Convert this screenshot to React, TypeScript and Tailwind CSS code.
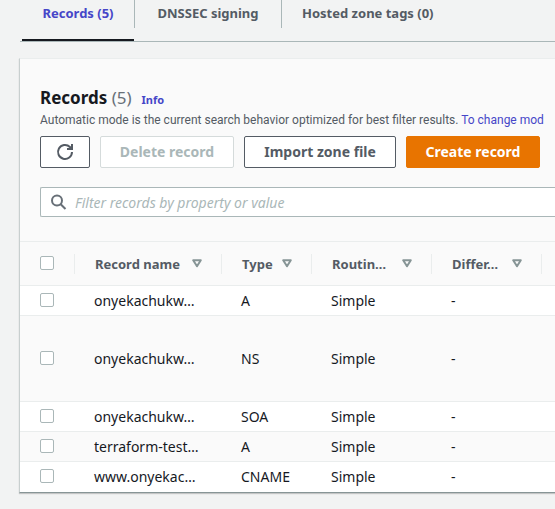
import React from "react";

type RecordRow = { name: string; type: string; routing: string; differ: string; tall?: boolean };

const rows: RecordRow[] = [
  { name: "onyekachukw…", type: "A", routing: "Simple", differ: "-" },
  { name: "onyekachukw…", type: "NS", routing: "Simple", differ: "-", tall: true },
  { name: "onyekachukw…", type: "SOA", routing: "Simple", differ: "-" },
  { name: "terraform-test…", type: "A", routing: "Simple", differ: "-" },
  { name: "www.onyekac…", type: "CNAME", routing: "Simple", differ: "-" },
];

const columns = ["Record name", "Type", "Routin…", "Differ…"];

function Checkbox({ label }: { label: string }) {
  return (
    <input
      type="checkbox"
      aria-label={label}
      className="mb-0.5 block size-3.5 appearance-none rounded-xs border border-[#aab7b8] bg-white checked:bg-[#4646c8]"
    />
  );
}

function SortIcon() {
  return (
    <svg width="10" height="9" viewBox="0 0 10 9" className="shrink-0" aria-hidden="true">
      <path d="M1.2 1.3h7.6L5 7.2z" fill="none" stroke="#879596" strokeWidth="2" strokeLinejoin="round" />
    </svg>
  );
}

function Tabs() {
  return (
    <div role="tablist" className="ml-5 flex h-[42px] items-start border-b border-[#aab7b8] pl-0.5 text-[13px] leading-5 font-bold whitespace-nowrap text-[#545b64]">
      <button role="tab" aria-selected="true" className="flex h-[41px] w-28 justify-center border-b-2 border-[#16191f] pt-[3px] text-[#4646c8]">
        Records (5)
      </button>
      <button role="tab" aria-selected="false" className="h-7 w-[148px] border-x border-[#aab7b8] pb-0.5">
        DNSSEC signing
      </button>
      <button role="tab" aria-selected="false" className="h-7 px-5 pb-0.5">
        Hosted zone tags (0)
      </button>
    </div>
  );
}

const buttonBase = "h-8 shrink-0 rounded-xs border text-sm font-bold";

export default function App() {
  return (
    <main className="min-h-screen overflow-hidden bg-[#f2f3f3] font-['Noto_Sans','Open_Sans',sans-serif] text-[#16191f]">
      <Tabs />
      <section className="mt-4 ml-[19px] border-t border-b border-l border-t-[#eaeded] border-b-[#879596] border-l-[#c8cfcf] bg-[#fafafa] shadow-[0_1px_1px_#00000030]">
        <div className="pt-[27px] pb-6 pl-5">
          <div className="flex h-6 items-baseline gap-2.5">
            <h2 className="text-[17px] leading-6 font-bold">
              Records <span className="font-normal text-[#687078]">(5)</span>
            </h2>
            <a href="#info" className="text-[11px] leading-4 font-bold text-[#4646c8]">Info</a>
          </div>
          <p className="font-[Roboto,'Noto_Sans',sans-serif] text-xs leading-5 whitespace-nowrap text-[#545b64]">
            Automatic mode is the current search behavior optimized for best filter results.{" "}
            <a href="#settings" className="text-[#4646c8]">To change mod</a>
          </p>
          <div className="mt-1.5 flex gap-2.5">
            <button aria-label="Refresh" className={`${buttonBase} flex w-[50px] items-center justify-center border-[#545b64] bg-white text-[#545b64]`}>
              <svg width="18" height="18" viewBox="0 0 18 18" fill="none" stroke="currentColor" strokeWidth="2" aria-hidden="true">
                <path d="M16 9a7 7 0 1 1-2.1-5L15.5 6" />
                <path d="M17 1v6h-6V5h2.5L15 3.5V1z" fill="currentColor" stroke="none" />
              </svg>
            </button>
            <button disabled className={`${buttonBase} w-[134px] border-[#d5dbdb] bg-white text-[#aab7b8]`}>Delete record</button>
            <button className={`${buttonBase} w-[152px] border-[#545b64] bg-white text-[#545b64]`}>Import zone file</button>
            <button className={`${buttonBase} w-[134px] border-[#e87400] bg-[#e87400] text-white`}>Create record</button>
          </div>
          <label className="mt-[19px] flex h-[30px] items-center gap-2 rounded-l-xs border border-r-0 border-[#aab7b8] bg-white pl-2.5">
            <svg width="16" height="16" viewBox="0 0 16 16" fill="none" stroke="#687078" strokeWidth="2" className="shrink-0" aria-hidden="true">
              <circle cx="6" cy="6.5" r="5" />
              <path d="m9.7 10.2 4.8 4.8" />
            </svg>
            <input
              type="text"
              aria-label="Filter records"
              placeholder="Filter records by property or value"
              className="h-7 min-w-0 flex-1 text-sm outline-none placeholder:text-[#aab7b8] placeholder:italic"
            />
          </label>
        </div>
        <table className="w-full table-fixed border-collapse text-left text-sm leading-5">
          <colgroup>
            <col className="w-[54px]" />
            <col className="w-[147px]" />
            <col className="w-[90px]" />
            <col className="w-[120px]" />
            <col className="w-[110px]" />
            <col />
          </colgroup>
          <thead>
            <tr className="h-11 border-y border-[#eaeded] text-[13px] text-[#545b64]">
              <th className="pl-5"><Checkbox label="Select all records" /></th>
              {columns.map((title) => (
                <th key={title} className="p-0 font-bold whitespace-nowrap">
                  <div className="flex h-5 items-center justify-between border-l border-[#eaeded] pr-[19px] pl-5">
                    {title}
                    <SortIcon />
                  </div>
                </th>
              ))}
              <th className="p-0"><div className="h-5 border-l border-[#eaeded]" /></th>
            </tr>
          </thead>
          <tbody>
            {rows.map((row, i) => (
              <tr key={i} className={`border-b border-[#eaeded] last:border-b-0 odd:bg-white ${row.tall ? "h-[86px]" : "h-[30px]"}`}>
                <td className="pl-5"><Checkbox label={`Select ${row.name}`} /></td>
                <td className="pl-5 whitespace-nowrap">{row.name}</td>
                <td className="pl-5">{row.type}</td>
                <td className="pl-5">{row.routing}</td>
                <td className="pl-5">{row.differ}</td>
                <td />
              </tr>
            ))}
          </tbody>
        </table>
      </section>
    </main>
  );
}
